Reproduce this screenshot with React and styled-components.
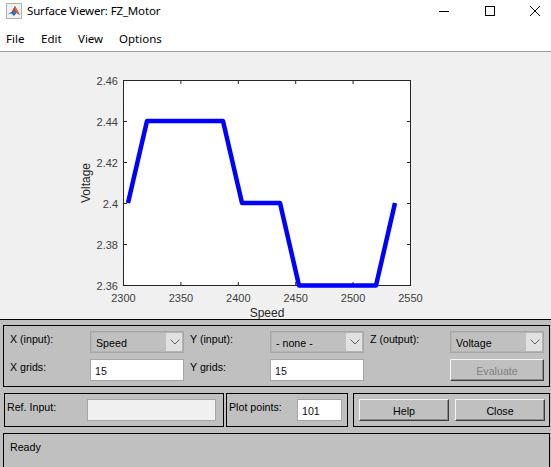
import React from 'react';
import styled, { createGlobalStyle } from 'styled-components';

const Global = createGlobalStyle`
  html, body { margin: 0; padding: 0; background: #c0c0c0; }
  * { box-sizing: border-box; }
`;

const Win = styled.div`
  width: 551px;
  height: 467px;
  overflow: hidden;
  display: flex;
  flex-direction: column;
  font-family: "Liberation Sans", Arial, sans-serif;
  font-size: 10.67px;
  color: #000;
`;

const TitleBar = styled.div`
  height: 21px;
  background: #fff;
  display: flex;
  align-items: center;
  padding-left: 6px;
  margin-right: -7px;
  font-family: "Noto Sans", sans-serif;
  font-size: 11.5px;
  letter-spacing: -0.15px;
`;

const TitleText = styled.span`
  margin-left: 5px;
  flex: 1;
`;

const WinButton = styled.div`
  width: 45.5px;
  height: 21px;
  display: flex;
  align-items: center;
  justify-content: center;
`;

const MenuBar = styled.div`
  height: 31px;
  background: #fff;
  border-bottom: 1px solid #a0a0a0;
  display: flex;
  align-items: center;
  font-family: "Noto Sans", sans-serif;
  font-size: 11.5px;
  padding: 5px 0 0 6px;
`;

const MenuItem = styled.span`
  width: ${p => p.$w}px;
`;

const Figure = styled.div`
  height: 268px;
  background: #f0f0f0;
  border-bottom: 1px solid #000;
`;

const Chart = styled.svg`
  display: block;
  font-family: "Liberation Sans", Arial, sans-serif;
`;

const Controls = styled.div`
  flex: 1;
  display: flex;
  flex-direction: column;
  gap: 6px;
  padding: 5px 1px 0 3px;
`;

const Panel = styled.div`
  border: 1px solid #000;
  background: #c0c0c0;
`;

const MainPanel = styled(Panel)`
  height: 62px;
  padding: 5px 0 0 6px;
  display: grid;
  grid-template-columns: 74px 94px 74px 94px 74px 94px;
  grid-auto-rows: 22px;
  column-gap: 6px;
  row-gap: 6px;
`;

const Row = styled.div`
  display: flex;
  height: 34px;
  padding-left: 1px;
`;

const RefPanel = styled(Panel)`
  width: 220px;
  padding: 5px 7px 0 2px;
  display: flex;
  justify-content: space-between;
`;

const PointsPanel = styled(Panel)`
  width: 122px;
  margin-left: 2px;
  padding: 5px 5px 0 2px;
  display: flex;
  justify-content: space-between;
`;

const ButtonPanel = styled(Panel)`
  flex: 1;
  margin-left: 5px;
  padding: 5px 4px 0 5px;
  display: flex;
  justify-content: space-between;
`;

const Label = styled.div`
  line-height: 14px;
  padding-top: 1px;
`;

const Select = styled.div`
  height: 22px;
  border: 1px solid #a6a6a6;
  outline: 1px solid #b4b4b4;
  outline-offset: -2px;
  background: #c0c0c0;
  display: flex;
  align-items: center;
  justify-content: space-between;
  padding-left: 5px;
`;

const SelectValue = styled.span`
  padding-top: 2px;
`;

const Caret = styled.div`
  width: 17px;
  height: 20px;
  background: #e1e1e1;
  display: flex;
  align-items: center;
  justify-content: center;
`;

const Field = styled.div`
  height: 22px;
  width: ${p => (p.$w ? `${p.$w}px` : 'auto')};
  background: ${p => (p.$off ? '#f0f0f0' : '#fff')};
  border: 1px solid #a6a6a6;
  padding-left: 4px;
  line-height: 23px;
  color: #1a0a1a;
`;

const Button = styled.div`
  height: 22px;
  width: ${p => (p.$w ? `${p.$w}px` : 'auto')};
  background: #c0c0c0;
  border: 1px solid;
  border-color: #f4f4f4 #3c3c3c #3c3c3c #f4f4f4;
  box-shadow: inset -1px -1px 0 #8a8a8a;
  padding-top: 1px;
  display: flex;
  align-items: center;
  justify-content: center;
  color: ${p => (p.$off ? '#808080' : '#000')};
`;

const Status = styled(Panel)`
  flex: 1;
  margin-bottom: -2px;
  padding: 6px 6px;
  line-height: 14px;
`;

const Logo = () => (
  <svg width="16" height="16" viewBox="0 0 16 16">
    <rect x="0.5" y="0.5" width="15" height="15" fill="#f0f0f0" stroke="#b0b0b0" />
    <path d="M2 11 L6 8.5 L9 3 L14 12 L10.5 10 L8 13 L5.5 10.5 Z" fill="#2f6fb5" />
    <path d="M9 3 L14 12 L10.5 10 L8.5 7 Z" fill="#e8641e" />
    <path d="M9 3 L8.5 7 L7 9 L6 8.5 Z" fill="#c23a1a" />
  </svg>
);

const xTicks = [2300, 2350, 2400, 2450, 2500, 2550];
const yTicks = ['2.46', '2.44', '2.42', '2.4', '2.38', '2.36'];
const line = '128,203 147,121 223,121 242,203 280,203 299,285.5 376,285.5 395,203';

const Plot = () => (
  <Chart width="551" height="267" viewBox="0 52 551 267">
    <rect x="123.5" y="80.5" width="287" height="205" fill="#fff" stroke="#262626" />
    {xTicks.map((t, i) => {
      const x = 123.5 + i * 57.4;
      return (
        <g key={t}>
          <path d={`M${x} 285 v-3 M${x} 81 v3`} stroke="#262626" />
          <text x={x} y="302" fontSize="11" fill="#404040" textAnchor="middle">{t}</text>
        </g>
      );
    })}
    {yTicks.map((t, i) => {
      const y = 80.5 + i * 41;
      return (
        <g key={t}>
          <path d={`M124 ${y} h3 M410 ${y} h-3`} stroke="#262626" />
          <text x="118" y={y + 4} fontSize="11" fill="#404040" textAnchor="end">{t}</text>
        </g>
      );
    })}
    <polyline points={line} fill="none" stroke="#0000ff" strokeWidth="4.5" strokeLinejoin="round" />
    <text x="267" y="317" fontSize="12" fill="#262626" textAnchor="middle">Speed</text>
    <text transform="translate(90 183) rotate(-90)" fontSize="12" fill="#262626" textAnchor="middle">Voltage</text>
  </Chart>
);

const Chevron = () => (
  <svg width="10" height="6" viewBox="0 0 10 6">
    <path d="M0.5 0.5 L5 5 L9.5 0.5" fill="none" stroke="#606060" />
  </svg>
);

const Drop = ({ value }) => (
  <Select>
    <SelectValue>{value}</SelectValue>
    <Caret><Chevron /></Caret>
  </Select>
);

export default function App() {
  return (
    <Win>
      <Global />
      <TitleBar>
        <Logo />
        <TitleText>Surface Viewer: FZ_Motor</TitleText>
        <WinButton>
          <svg width="10" height="10"><path d="M0 5.5 H10" stroke="#000" /></svg>
        </WinButton>
        <WinButton>
          <svg width="10" height="10"><rect x="0.5" y="0.5" width="9" height="9" fill="none" stroke="#000" /></svg>
        </WinButton>
        <WinButton>
          <svg width="10" height="10"><path d="M0 0 L10 10 M10 0 L0 10" stroke="#000" /></svg>
        </WinButton>
      </TitleBar>
      <MenuBar>
        <MenuItem $w={35}>File</MenuItem>
        <MenuItem $w={37}>Edit</MenuItem>
        <MenuItem $w={41}>View</MenuItem>
        <MenuItem>Options</MenuItem>
      </MenuBar>
      <Figure><Plot /></Figure>
      <Controls>
        <MainPanel>
          <Label>X (input):</Label>
          <Drop value="Speed" />
          <Label>Y (input):</Label>
          <Drop value="- none -" />
          <Label>Z (output):</Label>
          <Drop value="Voltage" />
          <Label>X grids:</Label>
          <Field>15</Field>
          <Label>Y grids:</Label>
          <Field>15</Field>
          <span />
          <Button $off>Evaluate</Button>
        </MainPanel>
        <Row>
          <RefPanel>
            <Label>Ref. Input:</Label>
            <Field $off $w={129} />
          </RefPanel>
          <PointsPanel>
            <Label>Plot points:</Label>
            <Field $w={45}>101</Field>
          </PointsPanel>
          <ButtonPanel>
            <Button $w={90}>Help</Button>
            <Button $w={90}>Close</Button>
          </ButtonPanel>
        </Row>
        <Status>Ready</Status>
      </Controls>
    </Win>
  );
}
